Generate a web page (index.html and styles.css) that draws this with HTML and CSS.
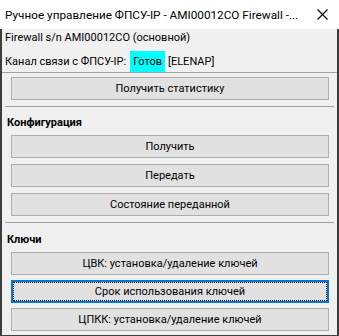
FILE: index.html
```html
<html><head>
<title>Ручное управление ФПСУ-IP</title>
<link rel="stylesheet" href="styles.css">
</head><body>

<div class="title">
<span class="caption-text">Ручное управление ФПСУ-IP - AMI00012CO Firewall -...</span>
<svg class="close" width="11" height="11" viewBox="0 0 11 11"><path d="M0.5 0.5L10.5 10.5M10.5 0.5L0.5 10.5" stroke="#000" stroke-width="1.1" fill="none"/></svg>
</div>

<div class="client">
<div class="info">Firewall s/n AMI00012CO (основной)</div>
<div class="link">Канал связи с ФПСУ-IP:<span class="ready">Готов</span>[ELENAP]</div>
<div class="stats"><button class="btn">Получить статистику</button></div>

<div class="sep"></div>
<div class="group">
<div class="head">Конфигурация</div>
<button class="btn">Получить</button>
<button class="btn">Передать</button>
<button class="btn">Состояние переданной</button>
</div>

<div class="sep"></div>
<div class="group last">
<div class="head">Ключи</div>
<button class="btn">ЦВК: установка/удаление ключей</button>
<button class="btn focus">Срок использования ключей</button>
<button class="btn">ЦПКК: установка/удаление ключей</button>
</div>
</div>

</body></html>
```

FILE: styles.css
```css
body{margin:0;width:339px;height:336px;overflow:hidden;background:#f0f0f0;font-family:Roboto,"Liberation Sans",sans-serif;font-size:11px;color:#000;}

.title{display:flex;align-items:center;height:29px;background:#fff;padding-left:5px;font-size:11.75px;}
.caption-text{flex:1;white-space:nowrap;overflow:hidden;}
.close{margin:0 11px 1px 0;}

.client{display:flex;flex-direction:column;height:306px;border:2px solid #3d3d3d;border-top:0;border-bottom-width:1px;}
.client > div{flex-shrink:0;}

.info{height:20px;padding:2px 0 0 3px;line-height:14px;}
.link{display:flex;align-items:center;height:21px;padding-left:3px;border-bottom:1px solid #a0a0a0;}
.ready{display:inline-block;height:21px;line-height:21px;margin:0 3px 0 4px;padding:0 3px;background:#00ffff;}
.stats{padding:4px 8px 6px 9px;}

.sep{height:0;margin:0 3px;border-top:1px solid #a0a0a0;}
.group{display:flex;flex-direction:column;padding:0 8px 0 9px;}
.head{padding:9px 0 5px 0;margin-left:-4px;line-height:14px;font-weight:bold;}
.last .head{padding-top:10px;}

.btn{display:block;flex-shrink:0;width:100%;height:23px;margin:0 0 6px 0;padding:0;border:1px solid #adadad;background:#e1e1e1;font-family:inherit;font-size:11px;color:#000;text-align:center;}
.stats .btn{margin:0;}
.last .btn{margin-bottom:5px;}
.focus{border:2px solid #0078d7;outline:1px dotted #000;outline-offset:-3px;}
```
